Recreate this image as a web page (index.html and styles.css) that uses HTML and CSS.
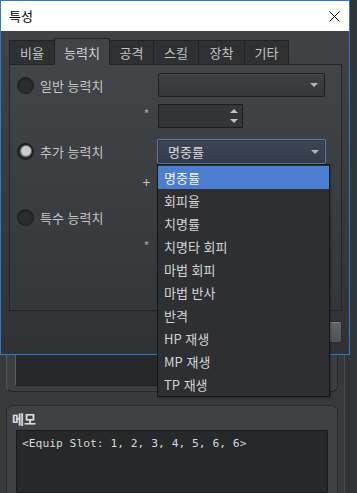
FILE: index.html
```html
<!DOCTYPE html>
<html lang="ko">
<head>
<meta charset="utf-8">
<link rel="stylesheet" href="styles.css">
</head>
<body>
<div class="main">
  <div class="main-col">
    <div class="frame-top">
      <div class="list-box"></div>
    </div>
    <div class="memo">
      <div class="memo-title">메모</div>
      <div class="memo-text">&lt;Equip Slot: 1, 2, 3, 4, 5, 6, 6&gt;</div>
    </div>
  </div>
  <div class="side"></div>
</div>

<div class="dialog">
  <div class="titlebar">
    <span class="title">특성</span>
    <svg class="close" width="11" height="11" viewBox="0 0 11 11"><path d="M0.5 0.5 L10.5 10.5 M10.5 0.5 L0.5 10.5" stroke="#000" stroke-width="1" fill="none"/></svg>
  </div>
  <div class="dbody">
    <div class="tabs">
      <div class="tab w46">비율</div>
      <div class="tab sel w55">능력치</div>
      <div class="tab w44">공격</div>
      <div class="tab w45">스킬</div>
      <div class="tab w46">장착</div>
      <div class="tab w44">기타</div>
    </div>
    <div class="panel">
      <div class="pair">
        <div class="rlabel"><span class="radio"></span>일반 능력치</div>
        <div></div>
        <div class="combo"><span class="ctext"></span><span class="arrow"></span></div>
        <div></div>
        <div class="sym">*</div>
        <div class="spin"><span class="up"></span><span class="down"></span></div>
      </div>
      <div class="pair">
        <div class="rlabel"><span class="radio on"></span>추가 능력치</div>
        <div></div>
        <div class="combo focus"><span class="ctext">명중률</span><span class="arrow"></span></div>
        <div></div>
        <div class="sym plus">+</div>
        <div class="combo"><span class="ctext"></span><span class="arrow"></span></div>
      </div>
      <div class="pair">
        <div class="rlabel"><span class="radio"></span>특수 능력치</div>
        <div></div>
        <div class="combo"><span class="ctext"></span><span class="arrow"></span></div>
        <div></div>
        <div class="sym">*</div>
        <div class="spin"><span class="up"></span><span class="down"></span></div>
      </div>
    </div>
    <div class="buttons">
      <div class="btn"></div>
      <div class="btn"></div>
    </div>
  </div>
</div>

<div class="popup">
  <div class="item hi">명중률</div>
  <div class="item">회피율</div>
  <div class="item">치명률</div>
  <div class="item">치명타 회피</div>
  <div class="item">마법 회피</div>
  <div class="item">마법 반사</div>
  <div class="item">반격</div>
  <div class="item">HP 재생</div>
  <div class="item">MP 재생</div>
  <div class="item">TP 재생</div>
</div>
</body>
</html>
```
FILE: styles.css
```css
* { box-sizing: border-box; }
html, body { margin: 0; padding: 0; }
body {
  width: 357px;
  height: 493px;
  overflow: hidden;
  background: #37393b;
  font-family: "Noto Sans CJK KR", "Noto Sans", sans-serif;
  font-size: 13px;
  position: relative;
}

/* main window behind */
.main { display: flex; height: 493px; }
.main-col { width: 338px; margin-left: 6px; display: flex; flex-direction: column; }
.side { width: 13px; margin-left: 6px; border-left: 1px solid #4a4c4e; background: #323436; }
.frame-top {
  height: 392px;
  border: 1px solid #232527;
  border-top: 0;
  border-left-color: #55585a;
  border-radius: 0 0 6px 6px;
  background: #3c3f41;
  display: flex;
  flex-direction: column;
  justify-content: flex-end;
  padding: 0 8px 5px 8px;
}
.list-box {
  height: 60px;
  background: #26282a;
  border: 1px solid #1c1d1f;
  border-left-color: #5b5d5f;
}
.memo {
  flex: 1;
  margin-top: 13px;
  border: 1px solid #26282a;
  border-bottom: 0;
  border-radius: 6px 6px 0 0;
  background: #3f4244;
  display: flex;
  flex-direction: column;
  padding: 0 9px 0 9px;
}
.memo-title {
  height: 24px;
  line-height: 22px;
  padding-top: 2px;
  margin-left: -4px;
  font-weight: bold;
  color: #dedede;
  font-size: 13px;
}
.memo-text {
  flex: 1;
  background: #26282a;
  border: 1px solid #18191a;
  padding: 5px 5px;
  font-family: "DejaVu Sans Mono", "Liberation Mono", monospace;
  font-size: 11.3px;
  line-height: 16px;
  color: #d8d8d8;
  white-space: pre;
}

/* dialog */
.dialog {
  position: absolute;
  left: 0;
  top: 0;
  width: 350px;
  height: 355px;
  border: 1px solid #2b79d3;
  display: flex;
  flex-direction: column;
  background: #3c3e40;
}
.titlebar {
  height: 30px;
  background: #fff;
  display: flex;
  align-items: center;
  justify-content: space-between;
  padding: 0 9px 0 8px;
}
.title { color: #000; font-size: 13px; line-height: 16px; }
.close { display: block; }
.dbody {
  flex: 1;
  background: linear-gradient(#404244, #303234);
  padding: 7px 7px 0 8px;
  display: flex;
  flex-direction: column;
}
.tabs { height: 26px; display: flex; align-items: flex-end; }
.tab {
  height: 24px;
  border: 1px solid #212325;
  border-bottom: 0;
  border-left-width: 0;
  background: #2e3032;
  color: #c2c2c2;
  display: flex;
  align-items: center;
  justify-content: center;
  font-size: 13px;
  padding-bottom: 1px;
}
.tab:first-child { border-left-width: 1px; }
.tab.sel {
  height: 27px;
  margin-bottom: -1px;
  background: #424547;
  color: #d2d2d2;
  position: relative;
  z-index: 1;
  padding-top: 2px;
  border-left-width: 1px;
  margin-left: -1px;
}
.w44 { width: 44px; } .w45 { width: 45px; } .w46 { width: 46px; } .w55 { width: 56px; }

.panel {
  height: 247px;
  border: 1px solid #222426;
  background: linear-gradient(#424547, #34373a);
  padding: 8px 0 0 7px;
  display: flex;
  flex-direction: column;
  gap: 11px;
}
.pair {
  display: grid;
  grid-template-columns: 122px 15px 171px;
  grid-template-rows: 24px 24px;
  row-gap: 7px;
}
.rlabel {
  display: flex;
  align-items: center;
  gap: 6px;
  color: #c4c4c4;
  font-size: 13px;
}
.radio {
  width: 17px;
  height: 17px;
  border-radius: 50%;
  background: #2a2c2e;
  border: 1px solid #1d1e20;
  box-shadow: inset 0 1px 2px rgba(0,0,0,0.35);
  display: flex;
  align-items: center;
  justify-content: center;
  flex: none;
}
.radio.on { border: 2px solid #1f2022; background: #3b3d3f; }
.radio.on::after {
  content: "";
  width: 10px;
  height: 10px;
  border-radius: 50%;
  background: #cbcbcb;
  box-shadow: 0 0 0 1px #6b6d6f;
}
.sym {
  display: flex;
  align-items: center;
  justify-content: center;
  color: #a8a8a8;
  font-size: 12px;
  padding-bottom: 6px;
}
.sym.plus { font-size: 14px; color: #c4c4c4; padding-bottom: 0; }
.combo {
  margin-left: 4px;
  width: 167px;
  height: 24px;
  border: 1px solid #1e1f21;
  border-radius: 2px;
  background: linear-gradient(#3e4143, #36393b);
  box-shadow: inset 0 1px 0 rgba(255,255,255,0.05);
  display: flex;
  align-items: center;
  justify-content: space-between;
  padding: 0 6px 0 10px;
}
.combo.focus {
  margin-left: 3px;
  width: 169px;
  height: 25px;
  border-color: #5a7caa;
  background: linear-gradient(#3d4556, #353c4a);
  box-shadow: inset 0 0 0 1px #2d3545;
}
.ctext { color: #d8d8d8; font-size: 13px; }
.arrow {
  width: 0;
  height: 0;
  border-left: 4px solid transparent;
  border-right: 4px solid transparent;
  border-top: 4px solid #b6b6b6;
}
.spin {
  margin-left: 4px;
  width: 85px;
  height: 24px;
  border: 1px solid #1d1e20;
  background: #333538;
  display: flex;
  flex-direction: column;
  align-items: flex-end;
  justify-content: center;
  gap: 6px;
  padding-right: 4px;
}
.up, .down {
  width: 0;
  height: 0;
  border-left: 4px solid transparent;
  border-right: 4px solid transparent;
}
.up { border-bottom: 4px solid #c2c2c2; }
.down { border-top: 4px solid #c2c2c2; }

.buttons {
  margin-top: 10px;
  display: flex;
  justify-content: flex-end;
  gap: 5px;
}
.btn {
  width: 90px;
  height: 22px;
  border: 1px solid #2a2c2e;
  border-radius: 2px;
  background: linear-gradient(#626567, #4f5254);
  box-shadow: inset 1px 1px 0 #7b7e80;
}

/* popup list */
.popup {
  position: absolute;
  left: 157px;
  top: 164px;
  width: 173px;
  height: 233px;
  background: #2d2f32;
  border: 1px solid #151617;
  padding: 1px 0 0 0;
  box-shadow: 1px 1px 2px rgba(0,0,0,0.3);
}
.item {
  height: 23px;
  line-height: 23px;
  padding-left: 6px;
  color: #d4d4d4;
  font-size: 13px;
}
.item.hi { background: #4b7dd0; color: #f4f4f4; }
```
